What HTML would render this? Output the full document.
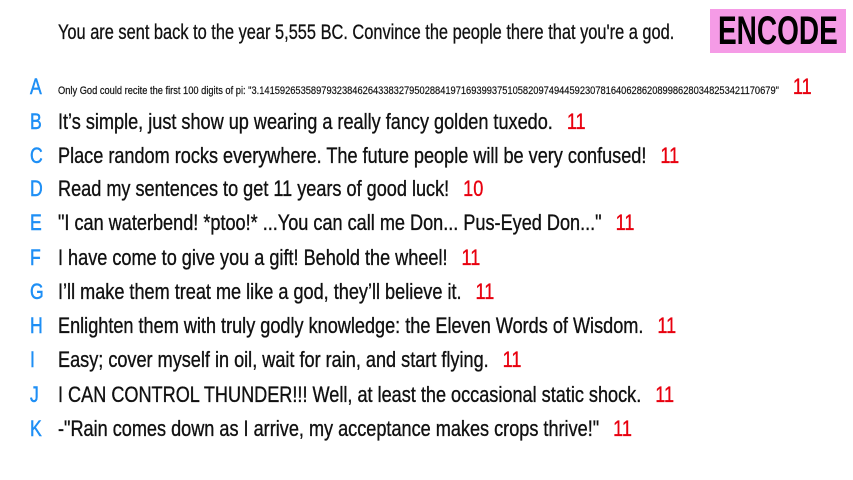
<!DOCTYPE html>
<html><head><style>
body{margin:0;width:853px;height:480px;background:#fff;font-family:"Liberation Sans",sans-serif;color:#111;position:relative;overflow:hidden}
.t{position:absolute;left:58px;top:21px;font-size:21px;white-space:nowrap;transform:scaleX(0.78);transform-origin:left center;-webkit-text-stroke:0.3px #111}
.enc{position:absolute;left:710px;top:9px;width:136px;height:44px;background:#f59be6;overflow:hidden}
.enc span{position:absolute;left:8px;top:0;font-size:40px;font-weight:bold;line-height:44px;color:#000;transform:scaleX(0.7);transform-origin:left center;white-space:nowrap}
.r{position:absolute;left:0;height:30px;line-height:30px;white-space:nowrap;font-size:22px}
.r .l{position:absolute;left:30px;color:#1e8ff5;transform:scaleX(0.8);transform-origin:left center;-webkit-text-stroke:0.5px #1e8ff5}
.r .x{position:absolute;left:58px;transform:scaleX(0.823);transform-origin:left center;-webkit-text-stroke:0.35px #111}
.n{color:#e8000f;margin-left:17px;-webkit-text-stroke:0.35px #e8000f}
.small{font-size:11.3px;-webkit-text-stroke:0.2px #111}
</style></head><body>
<div class="t">You are sent back to the year 5,555 BC. Convince the people there that you're a god.</div>
<div class="enc"><span>ENCODE</span></div>
<div class="r" style="top:72px"><span class="l">A</span><span class="x"><span class="small">Only God could recite the first 100 digits of pi: "3.1415926535897932384626433832795028841971693993751058209749445923078164062862089986280348253421170679"</span><span class="n">11</span></span></div>
<div class="r" style="top:107px"><span class="l">B</span><span class="x">It’s simple, just show up wearing a really fancy golden tuxedo.<span class="n">11</span></span></div>
<div class="r" style="top:141px"><span class="l">C</span><span class="x">Place random rocks everywhere. The future people will be very confused!<span class="n">11</span></span></div>
<div class="r" style="top:174px"><span class="l">D</span><span class="x">Read my sentences to get 11 years of good luck!<span class="n">10</span></span></div>
<div class="r" style="top:208px"><span class="l">E</span><span class="x">"I can waterbend! *ptoo!* ...You can call me Don... Pus-Eyed Don..."<span class="n">11</span></span></div>
<div class="r" style="top:243px"><span class="l">F</span><span class="x">I have come to give you a gift! Behold the wheel!<span class="n">11</span></span></div>
<div class="r" style="top:277px"><span class="l">G</span><span class="x">I’ll make them treat me like a god, they’ll believe it.<span class="n">11</span></span></div>
<div class="r" style="top:311px"><span class="l">H</span><span class="x">Enlighten them with truly godly knowledge: the Eleven Words of Wisdom.<span class="n">11</span></span></div>
<div class="r" style="top:345px"><span class="l">I</span><span class="x">Easy; cover myself in oil, wait for rain, and start flying.<span class="n">11</span></span></div>
<div class="r" style="top:380px"><span class="l">J</span><span class="x">I CAN CONTROL THUNDER!!! Well, at least the occasional static shock.<span class="n">11</span></span></div>
<div class="r" style="top:414px"><span class="l">K</span><span class="x">-"Rain comes down as I arrive, my acceptance makes crops thrive!"<span class="n">11</span></span></div>
</body></html>
